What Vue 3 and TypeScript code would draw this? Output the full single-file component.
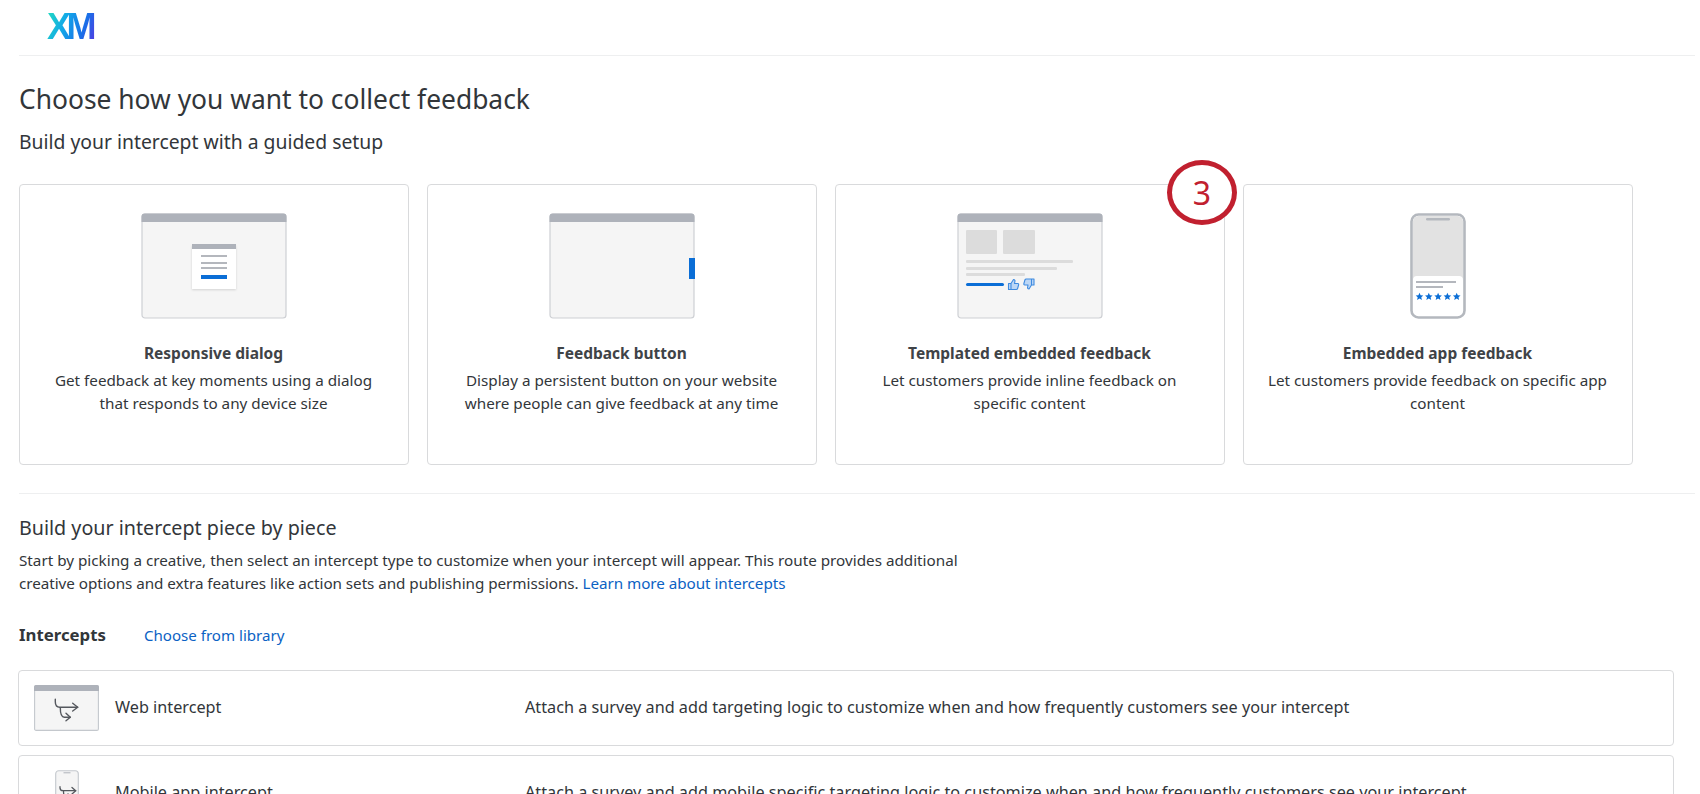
<script setup lang="ts">
interface Card { id: string; title: string; lines: string[] }
const cards: Card[] = [
  { id: 'dialog', title: 'Responsive dialog', lines: ['Get feedback at key moments using a dialog', 'that responds to any device size'] },
  { id: 'button', title: 'Feedback button', lines: ['Display a persistent button on your website', 'where people can give feedback at any time'] },
  { id: 'embedded', title: 'Templated embedded feedback', lines: ['Let customers provide inline feedback on', 'specific content'] },
  { id: 'app', title: 'Embedded app feedback', lines: ['Let customers provide feedback on specific app', 'content'] },
]
const rows = [
  { id: 'web', name: 'Web intercept', desc: 'Attach a survey and add targeting logic to customize when and how frequently customers see your intercept' },
  { id: 'mobile', name: 'Mobile app intercept', desc: 'Attach a survey and add mobile specific targeting logic to customize when and how frequently customers see your intercept' },
]
const starXs = [6, 15.3, 24.6, 33.9, 43.2]
</script>

<template>
  <div class="page">
    <header class="top">
      <span class="logo">XM</span>
    </header>
    <main class="content">
      <h1 class="title">Choose how you want to collect feedback</h1>
      <h2 class="sub">Build your intercept with a guided setup</h2>

      <div class="cards">
        <article v-for="c in cards" :key="c.id" class="card">
          <div class="art">
            <svg v-if="c.id === 'dialog'" width="146" height="106" viewBox="0 0 146 106">
              <rect x="1" y="1" width="144" height="104" rx="3" fill="#f5f5f5" stroke="#ced0d4" stroke-width="1.2"/>
              <path d="M0.5 9V3.5A3 3 0 0 1 3.5 0.5H142.5A3 3 0 0 1 145.5 3.5V9Z" fill="#aeb2ba"/>
              <rect x="51" y="32" width="44" height="44" fill="#fff" filter="url(#sh)"/>
              <rect x="51" y="31" width="44" height="5" fill="#aeb2ba"/>
              <rect x="60" y="42" width="26" height="2" fill="#b4b7bd"/>
              <rect x="60" y="49" width="26" height="2" fill="#b4b7bd"/>
              <rect x="60" y="54" width="26" height="2" fill="#b4b7bd"/>
              <rect x="60" y="62" width="26" height="4" fill="#0b6ed6"/>
              <defs><filter id="sh" x="-20%" y="-20%" width="140%" height="140%"><feDropShadow dx="0" dy="1" stdDeviation="1" flood-color="#000" flood-opacity=".14"/></filter></defs>
            </svg>
            <svg v-else-if="c.id === 'button'" width="146" height="106" viewBox="0 0 146 106">
              <rect x="1" y="1" width="144" height="104" rx="3" fill="#f5f5f5" stroke="#ced0d4" stroke-width="1.2"/>
              <path d="M0.5 9V3.5A3 3 0 0 1 3.5 0.5H142.5A3 3 0 0 1 145.5 3.5V9Z" fill="#aeb2ba"/>
              <rect x="140" y="45" width="6" height="21" fill="#0b6ed6"/>
            </svg>
            <svg v-else-if="c.id === 'embedded'" width="146" height="106" viewBox="0 0 146 106">
              <rect x="1" y="1" width="144" height="104" rx="3" fill="#f5f5f5" stroke="#ced0d4" stroke-width="1.2"/>
              <path d="M0.5 9V3.5A3 3 0 0 1 3.5 0.5H142.5A3 3 0 0 1 145.5 3.5V9Z" fill="#aeb2ba"/>
              <rect x="9" y="17" width="31" height="24" rx="1" fill="#dcdcdc"/>
              <rect x="46" y="17" width="32" height="24" rx="1" fill="#dcdcdc"/>
              <rect x="9" y="47" width="107" height="3" rx="1" fill="#dcdcdc"/>
              <rect x="9" y="54" width="91" height="3" rx="1" fill="#dcdcdc"/>
              <rect x="9" y="60" width="59" height="3" rx="1" fill="#dcdcdc"/>
              <rect x="9" y="70" width="38" height="3" rx="1.5" fill="#0b6ed6"/>
              <g fill="#bcd7f6" stroke="#3f8be0" stroke-width="1.1" stroke-linejoin="round">
                <path d="M51.500 70.500h2.500v6H51.500zM54 70.500l2.500-4c1.300 0 1.800 1 1.300 2.300L57.500 70.500h3.300c.8 0 1 .8.800 1.500l-1 3.500c-.2.700-.6 1-1.400 1H54z"/>
                <path d="M74.500 72H77v-6H74.500zM74.500 72l-2.500 4c-1.300 0-1.800-1-1.300-2.300L71 72H67.700c-.8 0-1-.8-.8-1.500l1-3.500c.2-.7.6-1 1.400-1H74.500z"/>
              </g>
            </svg>
            <svg v-else width="56" height="106" viewBox="0 0 56 106">
              <rect x="1.500" y="1.500" width="53" height="103" rx="7" fill="#fff" stroke="#b4b8be" stroke-width="2.600"/>
              <path d="M3 67V8.500A5.500 5.500 0 0 1 8.500 3H47.500A5.500 5.500 0 0 1 53 8.500V67A4 4 0 0 0 49 63H7A4 4 0 0 0 3 67Z" fill="#e2e2e2"/>
              <rect x="16" y="5" width="24" height="2.500" rx="1.200" fill="#b4b8be"/>
              <rect x="6" y="68" width="40" height="2" fill="#b4b7bd"/>
              <rect x="6" y="73" width="27" height="2" fill="#b4b7bd"/>
              <path v-for="x in starXs" :key="x" fill="#0b6ed6" :transform="`translate(${x + 3.500} 83.500)`" d="M0-3.800 1.100-1.200 3.800-1 1.800.8 2.400 3.500 0 2.100-2.400 3.500-1.800.8-3.800-1-1.100-1.200Z"/>
            </svg>
          </div>
          <h3 class="card-title">{{ c.title }}</h3>
          <p class="card-desc">{{ c.lines[0] }}<br />{{ c.lines[1] }}</p>
        </article>
      </div>

      <hr class="rule" />

      <h2 class="piece">Build your intercept piece by piece</h2>
      <p class="intro">
        Start by picking a creative, then select an intercept type to customize when your intercept will appear. This route provides additional<br />
        <span class="intro-tail">creative options and extra features like action sets and publishing permissions. <a class="link" href="#">Learn more about intercepts</a></span>
      </p>

      <div class="list-head">
        <strong class="list-title">Intercepts</strong>
        <a class="link" href="#">Choose from library</a>
      </div>

      <div class="rows">
        <div v-for="r in rows" :key="r.id" class="row">
          <div class="row-art">
            <svg v-if="r.id === 'web'" width="65" height="46" viewBox="0 0 65 46">
              <rect x="0.600" y="0.600" width="63.800" height="44.800" rx="1.500" fill="#f5f5f5" stroke="#c4c8cd" stroke-width="1.100"/>
              <path d="M0 6V2A2 2 0 0 1 2 0H63A2 2 0 0 1 65 2V6Z" fill="#aeb2ba"/>
              <g fill="none" stroke="#55585e" stroke-width="1.400" stroke-linecap="round" stroke-linejoin="round">
                <path d="M21.300 14.300v2.500c0 3.500 1.500 5.500 4.500 5.500H43.700"/>
                <path d="M38.700 18.300 43.700 22.300 38.700 26"/>
                <path d="M26.300 22.800c0 5 .5 9.500 4 9.500H36.300"/>
                <path d="M32 28.300 36.300 32.300 32 35.700"/>
              </g>
            </svg>
            <svg v-else width="24" height="47" viewBox="0 0 24 47">
              <rect x="0.700" y="0.700" width="22.600" height="45.600" rx="3" fill="#f5f5f5" stroke="#c4c8cd" stroke-width="1.100"/>
              <rect x="8.500" y="2.300" width="7" height="1" fill="#aeb2ba"/>
              <g fill="none" stroke="#55585e" stroke-width="1.300" stroke-linecap="round" stroke-linejoin="round">
                <path d="M5 16.700v1c0 2 1 3 3 3H20.700"/>
                <path d="M17 17.500 20.700 20.700 17 24"/>
                <path d="M8.500 21c0 3 .5 6 3 6H16"/>
                <path d="M13 24l3 3-3 2.500"/>
              </g>
            </svg>
          </div>
          <span class="row-name">{{ r.name }}</span>
          <span class="row-desc">{{ r.desc }}</span>
        </div>
      </div>
    </main>

    <div class="callout">3</div>
  </div>
</template>

<style>
html, body { margin: 0; background: #fff; }
</style>

<style scoped>
.page {
  position: relative;
  height: 794px;
  overflow: hidden;
  background: #fff;
  color: #32363a;
  font-family: "Noto Sans", sans-serif;
}
.top {
  height: 55px;
  margin: 0 5px 0 19px;
  border-bottom: 1px solid #eeeff0;
  display: flex;
  align-items: flex-start;
}
.logo {
  margin: 12px 0 0 28px;
  font: 700 36px/30px "Liberation Sans", sans-serif;
  letter-spacing: -4.500px;
  padding-right: 4.500px;
  background: linear-gradient(110deg, #21dcc0 0%, #12a8e8 35%, #1a6fe8 70%, #5a33e0 100%);
  -webkit-background-clip: text;
  background-clip: text;
  color: transparent;
}
.content { padding: 0 5px 0 19px; }
.title {
  margin: 24px 0 0;
  font-size: 26.400px;
  line-height: 38px;
  font-weight: 400;
}
.sub {
  margin: 11px 0 0;
  font-size: 19.350px;
  line-height: 26px;
  font-weight: 400;
}
.cards {
  display: flex;
  gap: 18px;
  margin: 29px 0 0 -0.500px;
}
.card {
  width: 390px;
  height: 281px;
  box-sizing: border-box;
  border: 1px solid #d9dadc;
  border-radius: 4px;
  display: flex;
  flex-direction: column;
  align-items: center;
  padding-top: 28px;
  text-align: center;
}
.art { height: 106px; display: flex; }
.card-title {
  margin: 23px 0 0;
  font-size: 15.500px;
  line-height: 22px;
  font-weight: 700;
  color: #3f4347;
}
.card-desc {
  margin: 5px 0 0;
  font-size: 15.240px;
  line-height: 23px;
}
.rule {
  margin: 28px 0 0;
  border: 0;
  border-top: 1px solid #eeeff0;
}
.piece {
  margin: 21px 0 0;
  font-size: 19.700px;
  line-height: 26px;
  font-weight: 400;
}
.intro {
  margin: 8px 0 0;
  font-size: 15.240px;
  line-height: 23px;
}
.intro-tail { letter-spacing: -0.050px; }
.link { color: #0b62c4; text-decoration: none; }
.list-head {
  display: flex;
  align-items: center;
  gap: 38px;
  margin-top: 28px;
  font-size: 15.100px;
  line-height: 24px;
}
.list-title { font-size: 16.800px; font-weight: 700; }
.rows {
  display: flex;
  flex-direction: column;
  gap: 9px;
  margin: 23px 0 0 -1px;
}
.row {
  display: flex;
  align-items: center;
  height: 76px;
  width: 1656px;
  box-sizing: border-box;
  border: 1px solid #d9dadc;
  border-radius: 4px;
  font-size: 16.230px;
  padding-bottom: 2px;
}
.row-art {
  width: 65px;
  margin-left: 15px;
  flex: none;
  display: flex;
  justify-content: center;
  margin-bottom: -2px;
}
.row-name { width: 410px; margin-left: 16px; flex: none; }
.row-desc { white-space: nowrap; }
.callout {
  position: absolute;
  left: 1167px;
  top: 160px;
  width: 70px;
  height: 65px;
  box-sizing: border-box;
  border: 5px solid #c1202f;
  border-radius: 50%;
  background: #fff;
  color: #c1202f;
  display: flex;
  align-items: center;
  justify-content: center;
  font-size: 32px;
}
</style>
